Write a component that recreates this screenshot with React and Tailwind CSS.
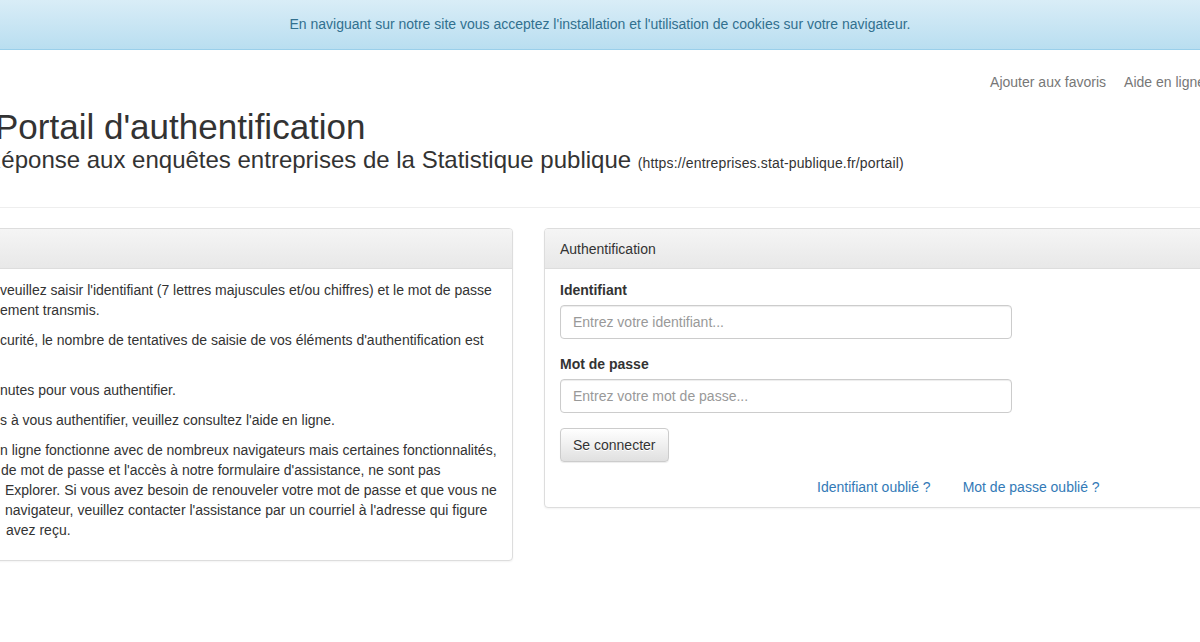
const Panel = ({ className = "", title, children }) => (
  <div className={`rounded-[4px] border border-[#ddd] bg-white shadow-[0_1px_2px_rgba(0,0,0,0.05)] ${className}`}>
    <div className="h-[40px] rounded-t-[3px] border-b border-[#ddd] bg-gradient-to-b from-[#f5f5f5] to-[#e8e8e8] px-[15px] py-[10px] text-[14px] leading-[20px] text-[#333]">
      {title}
    </div>
    {children}
  </div>
);

const Field = ({ label, placeholder, type = "text" }) => (
  <div className="mb-[15px]">
    <label className="mb-[5px] block text-[14px] font-bold leading-[20px] text-[#333]">{label}</label>
    <input
      type={type}
      placeholder={placeholder}
      className="block h-[34px] w-[452px] rounded-[4px] border border-[#ccc] bg-white px-[12px] py-[6px] text-[14px] text-[#555] shadow-[inset_0_1px_1px_rgba(0,0,0,0.075)] outline-none placeholder:text-[#999]"
    />
  </div>
);

export default function App() {
  return (
    <div className="min-h-[642px] w-[1200px] overflow-hidden bg-white font-['Liberation_Sans',Arial,sans-serif] text-[14px] text-[#333]">
      <div className="flex h-[50px] items-center justify-center border-b border-[#9acfea] bg-gradient-to-b from-[#d9edf7] to-[#b9def0] text-[14px] text-[#31708f]">
        En naviguant sur notre site vous acceptez l'installation et l'utilisation de cookies sur votre navigateur.
      </div>

      <div className="-mr-[5px] mt-[22px] flex justify-end gap-[18px] whitespace-nowrap leading-[20px] text-[#777]">
        <a href="#">Ajouter aux favoris</a>
        <a href="#">Aide en ligne</a>
      </div>

      <h1 className="-ml-[5px] mt-[15px] whitespace-nowrap text-[35px] leading-[40px] text-[#333]">Portail d'authentification</h1>
      <div className="-ml-[16px] whitespace-nowrap text-[24px] leading-[26px] text-[#333]">
        Réponse aux enquêtes entreprises de la Statistique publique{" "}
        <small className="text-[14px] tracking-[0.15px]">(https://entreprises.stat-publique.fr/portail)</small>
      </div>

      <hr className="mt-[31px] border-t border-[#eee]" />

      <div className="mt-[20px] flex items-start gap-[31px]">
        <Panel className="-ml-[20px] w-[533px] shrink-0" title="">
          <div className="whitespace-nowrap pb-[10px] pl-[19px] pr-[15px] pt-[11px] leading-[20px]">
            <p className="mb-[10px]">
              <span className="block">veuillez saisir l'identifiant (7 lettres majuscules et/ou chiffres) et le mot de passe</span>
              <span className="block">ement transmis.</span>
            </p>
            <p className="mb-[10px]">
              <span className="block">curité, le nombre de tentatives de saisie de vos éléments d'authentification est</span>
              <span className="block h-[20px]"></span>
            </p>
            <p className="mb-[10px]">nutes pour vous authentifier.</p>
            <p className="mb-[10px]">s à vous authentifier, veuillez consultez l'aide en ligne.</p>
            <p className="mb-[10px]">
              <span className="block">n ligne fonctionne avec de nombreux navigateurs mais certaines fonctionnalités,</span>
              <span className="block pl-[1px]">de mot de passe et l'accès à notre formulaire d'assistance, ne sont pas</span>
              <span className="block pl-[5px]">Explorer. Si vous avez besoin de renouveler votre mot de passe et que vous ne</span>
              <span className="block pl-[5px]">navigateur, veuillez contacter l'assistance par un courriel à l'adresse qui figure</span>
              <span className="block pl-[6px]">avez reçu.</span>
            </p>
          </div>
        </Panel>

        <Panel className="w-[700px] shrink-0" title="Authentification">
          <form className="px-[15px] pb-[10px] pt-[11px]">
            <Field label="Identifiant" placeholder="Entrez votre identifiant..." />
            <Field label="Mot de passe" placeholder="Entrez votre mot de passe..." type="password" />
            <button
              type="button"
              className="mb-[15px] h-[34px] rounded-[4px] border border-[#ccc] bg-gradient-to-b from-white to-[#e0e0e0] px-[12px] text-[14px] text-[#333] shadow-[inset_0_1px_0_rgba(255,255,255,0.15),0_1px_1px_rgba(0,0,0,0.075)] [text-shadow:0_1px_0_#fff]"
            >
              Se connecter
            </button>
            <div className="flex gap-[32px] pl-[257px] leading-[20px] text-[#337ab7]">
              <a href="#">Identifiant oublié ?</a>
              <a href="#">Mot de passe oublié ?</a>
            </div>
          </form>
        </Panel>
      </div>
    </div>
  );
}
